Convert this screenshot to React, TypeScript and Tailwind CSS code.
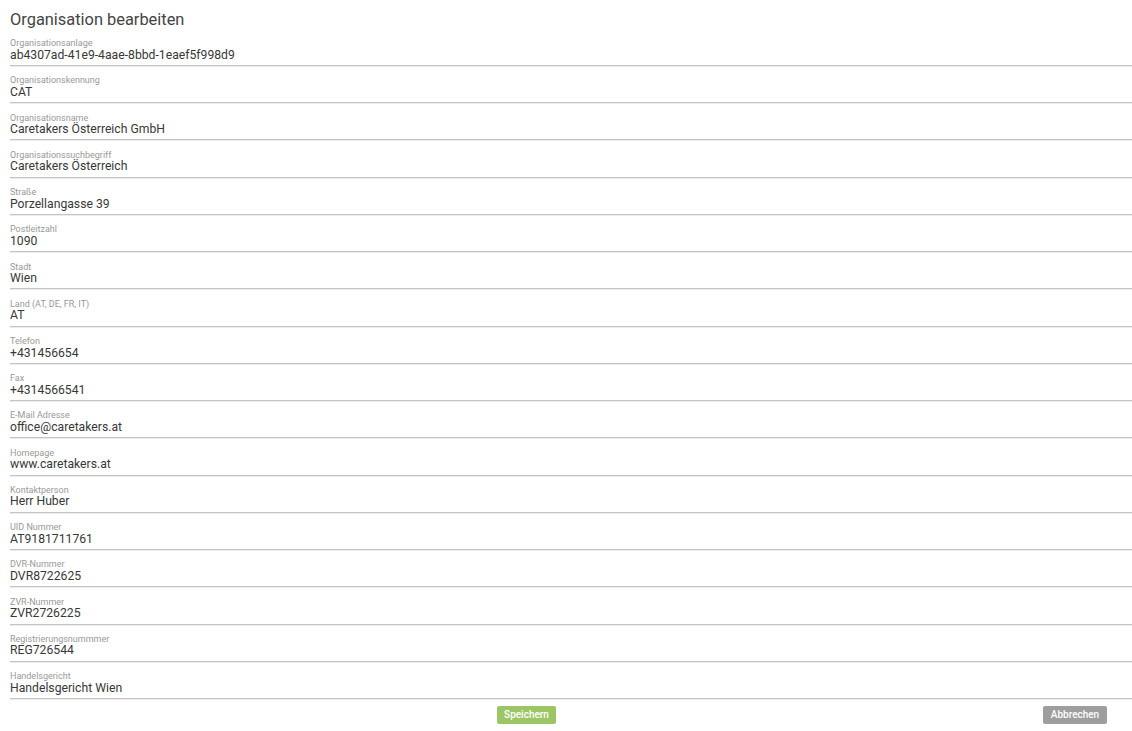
const fields: { label: string; value: string }[] = [
  { label: 'Organisationsanlage', value: 'ab4307ad-41e9-4aae-8bbd-1eaef5f998d9' },
  { label: 'Organisationskennung', value: 'CAT' },
  { label: 'Organisationsname', value: 'Caretakers Österreich GmbH' },
  { label: 'Organisationssuchbegriff', value: 'Caretakers Österreich' },
  { label: 'Straße', value: 'Porzellangasse 39' },
  { label: 'Postleitzahl', value: '1090' },
  { label: 'Stadt', value: 'Wien' },
  { label: 'Land (AT, DE, FR, IT)', value: 'AT' },
  { label: 'Telefon', value: '+431456654' },
  { label: 'Fax', value: '+4314566541' },
  { label: 'E-Mail Adresse', value: 'office@caretakers.at' },
  { label: 'Homepage', value: 'www.caretakers.at' },
  { label: 'Kontaktperson', value: 'Herr Huber' },
  { label: 'UID Nummer', value: 'AT9181711761' },
  { label: 'DVR-Nummer', value: 'DVR8722625' },
  { label: 'ZVR-Nummer', value: 'ZVR2726225' },
  { label: 'Registrierungsnummmer', value: 'REG726544' },
  { label: 'Handelsgericht', value: 'Handelsgericht Wien' },
]

function Field({ label, value }: { label: string; value: string }) {
  return (
    <div className="h-[37.24px] pt-[10.4px] border-b border-[#c4c4c4] shadow-[0_1px_0_#ececec]">
      <div className="text-[9px] leading-[9px] text-[#999999] whitespace-nowrap">{label}</div>
      <div className="mt-[0.5px] text-[12.2px] leading-[12px] text-[#383838] whitespace-nowrap">{value}</div>
    </div>
  )
}

export default function App() {
  return (
    <div className="w-[1132px] h-[731px] bg-white" style={{ fontFamily: 'Roboto, "Liberation Sans", sans-serif' }}>
      <h1 className="pl-[10px] pt-[11.4px] h-[28.76px] text-[16.4px] leading-[17px] text-[#444444] font-normal">
        Organisation bearbeiten
      </h1>
      <div className="pl-[10px]">
        {fields.map((f) => (
          <Field key={f.label} label={f.label} value={f.value} />
        ))}
      </div>
      <div className="flex items-center mt-[7px] pl-[497px] pr-[25px]">
        <button className="h-[18px] w-[59px] rounded-[2px] bg-[#9cc665] text-white text-[10px] font-medium leading-[18px]">
          Speichern
        </button>
        <button className="ml-auto h-[18px] w-[64px] rounded-[2px] bg-[#9e9e9e] text-white text-[10px] font-medium leading-[18px]">
          Abbrechen
        </button>
      </div>
    </div>
  )
}
